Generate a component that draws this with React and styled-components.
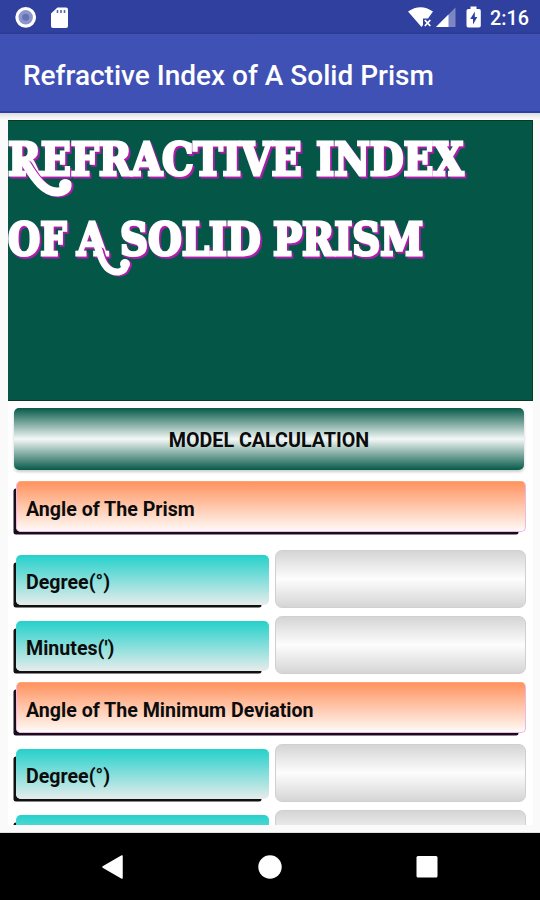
import React, { Component } from 'react';

import styled, { createGlobalStyle } from 'styled-components'

const GlobalStyle = createGlobalStyle`
    * {
        box-sizing: border-box;
    }
    body {
        margin: 0;
        background: #fafafa;
        font-family: Roboto, sans-serif;
    }
`

const Screen = styled.div`
    display: flex;
    flex-direction: column;
    width: 540px;
    height: 900px;
    overflow: hidden;
    background: #fafafa;
`

const StatusBar = styled.header`
    display: flex;
    justify-content: space-between;
    flex: 0 0 34px;
    background: linear-gradient(#30409f 31px, #2c3a90 34px);
    color: #fff;
`

const StatusTime = styled.span`
    width: 50px;
    padding-top: 7px;
    font-size: 19.8px;
    font-weight: 500;
    line-height: 23px;
`

const StatusGroup = styled.div`
    display: flex;
`

const AppBar = styled.div`
    display: flex;
    align-items: center;
    flex: 0 0 79px;
    padding: 7px 23px 0;
    background: #3f51b5;
    border-bottom: 2px solid #2b3fa5;
`

const Title = styled.h1`
    margin: 0;
    color: #fff;
    font-size: 28px;
    font-weight: 500;
    line-height: 32px;
    white-space: nowrap;
`

const Body = styled.main`
    flex: 1;
    min-height: 0;
    padding: 7px 7px 7px 8px;
    background: linear-gradient(#dedede, #fafafa 6px);
    border-bottom: 1px solid #e0e0e0;
`

const Content = styled.div`
    height: 100%;
    overflow: hidden;
    background: #fff;
`

const Banner = styled.div`
    height: 281px;
    margin-bottom: 7px;
    padding-top: 1px;
    border: 1px solid #073c22;
    border-left-width: 0;
    background: #045747;
`

const BannerLine = styled.div`
    display: flex;
    gap: 11px;
    height: 80px;
`

const Word = styled.span`
    position: relative;
    width: ${props => props.$width}px;
    color: #fff;
    font-family: 'DejaVu Serif', serif;
    font-size: 45px;
    font-weight: bold;
    line-height: 75px;
    white-space: nowrap;

    span {
        display: inline-block;
        transform: scaleX(${props => props.$scale});
        transform-origin: left;
        -webkit-text-stroke: 3px #fff;
        filter: drop-shadow(2px 2px 0 #b01cac);
    }
`

// curled tail that hangs below the first letter of a word
const Flourish = styled.svg`
    position: absolute;
    left: 0;
    top: 0;
    overflow: visible;
    filter: drop-shadow(2px 1px 0 #b01cac);
`

const CalcButton = styled.button`
    display: block;
    width: 510px;
    height: 62px;
    margin: 0 0 11px 6px;
    padding: 3px 0 0;
    border: 0;
    border-radius: 5px;
    background: linear-gradient(#075a49, #f4f8f7 50%, #075a49);
    box-shadow: 0 2px 3px rgba(0, 0, 0, 0.2);
    color: #0b0b0b;
    font-family: inherit;
    font-size: 19.7px;
    font-weight: bold;
`

const Label = styled.div`
    width: ${props => props.$width || 253}px;
    height: ${props => props.$height || 50}px;
    padding-left: 10px;
    border-radius: 5px;
    background: linear-gradient(#25d1cb, #e6eceb);
    box-shadow: -5px 5px 0 -2.5px #111;
    color: #0c0c0c;
    font-size: 19.6px;
    font-weight: bold;
    line-height: 55px;
    white-space: nowrap;
`

const SectionLabel = styled(Label)`
    margin-left: 8px;
    padding-left: 9px;
    border: 1px solid #efb5e4;
    border-top-color: #ffa577;
    background: linear-gradient(#ff935f, #fffaf7);
    box-shadow: -5px 5px 0 -2.5px #190c1c;
`

const Row = styled.div`
    display: flex;
    align-items: flex-start;
    gap: 6px;
    margin: 0 0 8px 8px;

    ${Label} {
        margin-top: 5px;
    }
`

const Fields = styled.div`
    padding-top: ${props => props.$top}px;
`

const Field = styled.input`
    width: 251px;
    height: 58px;
    padding: 0 10px;
    border: 1px solid #d0d0d0;
    border-radius: 7px;
    background: linear-gradient(#d5d5d5, #fdfdfd 50%, #d5d5d5);
    outline: 0;
`

const NavBar = styled.nav`
    display: flex;
    justify-content: space-between;
    flex: 0 0 67px;
    padding: 21px 102px 0 101px;
    background: #000;
`

const sections = [
    { title: 'Angle of The Prism', top: 18, fields: ['Degree(°)', "Minutes(')"] },
    { title: 'Angle of The Minimum Deviation', top: 11, fields: ['Degree(°)', ''] }
]

const NotificationIcons = () => (
    <svg width="80" height="34" viewBox="0 0 80 34">
        <circle cx="25.7" cy="17.3" r="8.8" fill="#8c96cc" stroke="#fff" strokeWidth="3.2" />
        <circle cx="25.7" cy="17.3" r="3.5" fill="#6672b6" />
        <path d="M57.5 7.5H66q2 0 2 2v16.5q0 2-2 2H53q-2 0-2-2V13.5z" fill="#fff" />
        <path d="M57.5 10v3M61 10v3M64.5 10v3" stroke="#5965ae" strokeWidth="1.6" />
    </svg>
)

const SystemIcons = () => (
    <svg width="85" height="34" viewBox="405 0 85 34">
        <path d="M408 11.5q12.5-8.5 25 0l-5 7h-5v6.5l-1.5 2z" fill="#fff" />
        <path d="M424.8 20l5.5 6m0-6l-5.5 6" stroke="#fff" strokeWidth="1.8" />
        <path d="M436 27L455.5 7.5v19.5z" fill="#7c86c3" />
        <path d="M436 27L448.5 14.5V27z" fill="#fff" />
        <path d="M470.5 6.5h6V9h2.5q1.8 0 1.8 1.8v15q0 1.8-1.8 1.8h-10.700q-1.8 0-1.8-1.8v-15q0-1.8 1.8-1.8h2.2z" fill="#fff" />
        <path d="M474.8 11.5l-4.5 7.5h2.7v5.5l4.3-7.5h-2.5z" fill="#303f9f" />
    </svg>
)

export class PrismScreen extends Component {
    state = {
        values: {}
    }

    handleChange = (key, value) => {
        this.setState({ values: { ...this.state.values, [key]: value } })
    }

    render() {
        return (
            <Screen>
                <GlobalStyle />
                <StatusBar>
                    <NotificationIcons />
                    <StatusGroup>
                        <SystemIcons />
                        <StatusTime>2:16</StatusTime>
                    </StatusGroup>
                </StatusBar>
                <AppBar>
                    <Title>Refractive Index of A Solid Prism</Title>
                </AppBar>
                <Body>
                    <Content>
                        <Banner>
                            <BannerLine>
                                <Word $width={297} $scale={0.875}>
                                    <span>REFRACTIVE</span>
                                    <Flourish width="65" height="80">
                                        <path d="M18 42C27 57 37 71 50 70Q60 69 59 62" fill="none" stroke="#fff" strokeWidth="9" strokeLinecap="round" />
                                        <circle cx="57" cy="63" r="6" fill="#fff" />
                                    </Flourish>
                                </Word>
                                <Word $width={146} $scale={0.865}><span>INDEX</span></Word>
                            </BannerLine>
                            <BannerLine>
                                <Word $width={58} $scale={0.82}><span>OF</span></Word>
                                <Word $width={32} $scale={0.87}>
                                    <span>A</span>
                                    <Flourish width="60" height="80">
                                        <path d="M22 48C25 61 31 71 42 70Q49 68 48 62" fill="none" stroke="#fff" strokeWidth="7" strokeLinecap="round" />
                                        <circle cx="48" cy="62" r="5" fill="#fff" />
                                    </Flourish>
                                </Word>
                                <Word $width={142} $scale={0.86}><span>SOLID</span></Word>
                                <Word $width={150} $scale={0.86}><span>PRISM</span></Word>
                            </BannerLine>
                        </Banner>
                        <CalcButton>MODEL CALCULATION</CalcButton>
                        {sections.map(section => (
                            <React.Fragment key={section.title}>
                                <SectionLabel $width={510} $height={51}>{section.title}</SectionLabel>
                                <Fields $top={section.top}>
                                    {section.fields.map(name => {
                                        const key = `${section.title} ${name}`
                                        return (
                                            <Row key={key}>
                                                <Label>{name}</Label>
                                                <Field
                                                    value={this.state.values[key] || ''}
                                                    onChange={e => this.handleChange(key, e.target.value)} />
                                            </Row>
                                        )
                                    })}
                                </Fields>
                            </React.Fragment>
                        ))}
                    </Content>
                </Body>
                <NavBar>
                    <svg width="22" height="26" viewBox="0 0 22 26">
                        <path d="M21 2v22L2 13z" fill="#fff" stroke="#fff" strokeWidth="1.5" strokeLinejoin="round" />
                    </svg>
                    <svg width="24" height="26" viewBox="0 0 24 26">
                        <circle cx="12" cy="13" r="11.7" fill="#fff" />
                    </svg>
                    <svg width="22" height="26" viewBox="0 0 22 26">
                        <rect x="0.5" y="2" width="21" height="21.5" rx="1.5" fill="#fff" />
                    </svg>
                </NavBar>
            </Screen>
        );
    }
}

export default PrismScreen;
